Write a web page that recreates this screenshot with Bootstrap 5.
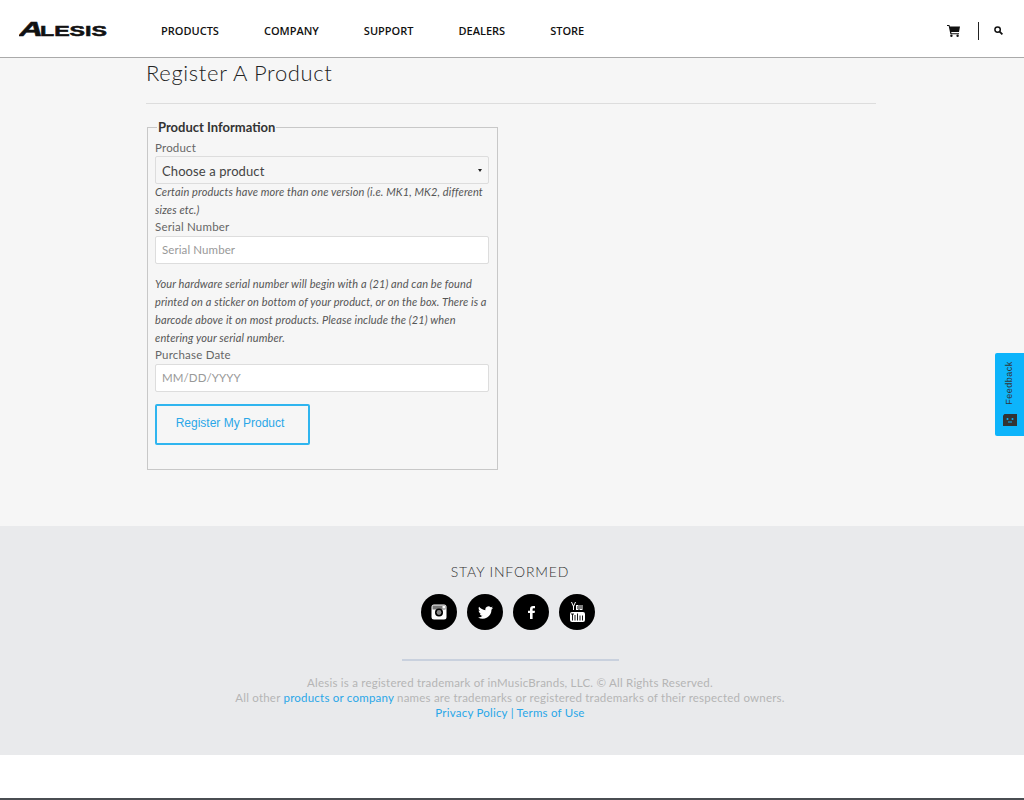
<!DOCTYPE html>
<html lang="en">
<head>
    <meta charset="UTF-8">
    <meta name="viewport" content="width=device-width, initial-scale=1.0">
    <title>Alesis - Register A Product</title>
    <link rel="stylesheet" href="https://cdn.jsdelivr.net/npm/bootstrap@5.3.0/dist/css/bootstrap.min.css">
    <style>
        html, body { height: 800px; overflow: hidden; }
        body {
            background: #fff;
            font-family: Lato, "Liberation Sans", sans-serif;
            color: #555;
            font-size: 11.5px;
            border-bottom: 2px solid #4a4d52;
        }
        .site-nav {
            height: 58px;
            padding: 0;
            background: #fff;
            border-bottom: 1px solid #aaa;
        }
        .logo-box { width: 161px; padding-left: 19px; display: block; line-height: 0; }
        .logo-box text { font-family: "Liberation Sans", sans-serif; font-weight: 700; stroke: #111; stroke-width: .5px; }
        .logo-box .logo-a { font-style: italic; }
        .main-links { gap: 45px; padding-top: 5px; }
        .main-links a {
            padding: 0;
            font-family: "Open Sans", sans-serif;
            font-size: 11px;
            font-weight: 600;
            color: #111;
            text-transform: uppercase;
        }
        .nav-tools { margin-left: auto; padding-right: 21px; padding-top: 4px; }
        .tool-sep { width: 1px; height: 18px; background: #222; margin: 0 15px 0 18px; }
        .page-main { height: 468px; background: #f6f6f6; }
        .page-wrap { width: 730px; margin-left: 146px; }
        .page-title {
            margin: 0;
            padding-top: 2px;
            height: 46px;
            font-family: Lato, sans-serif;
            font-size: 22px;
            font-weight: 300;
            line-height: 26px;
            letter-spacing: .65px;
            color: #222;
            border-bottom: 1px solid #ddd;
        }
        .info-box {
            width: 351px;
            height: 352px;
            margin: 14px 0 0 1px;
            padding: 0 8px 0 7px;
            border: 1px solid #c8c8c8;
        }
        .info-box legend {
            float: none;
            width: auto;
            margin: 0 0 0 2px;
            padding: 0 1px;
            font-size: 13px;
            font-weight: 700;
            line-height: 18px;
            color: #333;
        }
        .field-label { display: block; margin: 1px 0 0; font-size: 11.5px; line-height: 14px; letter-spacing: .2px; color: #666; }
        .first-label { margin-top: 5px; }
        .help-note { margin: -1px 0 0; font-size: 11px; font-style: italic; line-height: 18px; letter-spacing: .12px; color: #555; }
        .help-long { margin-top: 11px; }
        .input-gap { margin-top: 2px; }
        .select-wrap.input-gap { margin-top: 1px; }
        .info-box .form-select, .info-box .form-control {
            height: 28px;
            padding: 0 6px 2px;
            border: 1px solid #ddd;
            border-radius: 2px;
            font-size: 11.5px;
            letter-spacing: .1px;
        }
        .info-box .form-select {
            padding: 3px 6px 0;
            font-size: 13px;
            color: #444;
            background-color: #f6f6f6;
            background-image: none;
        }
        .info-box .form-control::placeholder { color: #999; opacity: 1; }
        .select-wrap { position: relative; }
        .select-wrap::after {
            content: "";
            position: absolute;
            right: 7px;
            top: 13px;
            border: 2.5px solid transparent;
            border-top: 3px solid #222;
            border-bottom: 0;
        }
        .save-btn {
            display: block;
            width: 155px;
            height: 41px;
            margin-top: 12px;
            padding: 0 5px 3px 0;
            background: transparent;
            border: 2px solid #2fb5ef;
            border-radius: 2px;
            font-family: "Liberation Sans", sans-serif;
            font-size: 12px;
            color: #2aa7e8;
        }
        .site-foot { height: 229px; padding-right: 4px; background: #e9eaec; text-align: center; }
        .foot-title {
            margin: 0;
            padding-top: 37px;
            font-family: Lato, sans-serif;
            font-size: 14px;
            font-weight: 300;
            line-height: 18px;
            letter-spacing: .85px;
            color: #333;
        }
        .social-row { gap: 10px; margin: 13px 4px 0 0; }
        .round-icon {
            width: 36px;
            height: 36px;
            border-radius: 50%;
            background: #000;
            color: #fff;
        }
        .foot-rule { width: 217px; height: 2px; margin: 29px 0 0 402px; background: #c9d1de; }
        .foot-legal { margin: 14px 0 0; font-size: 11.5px; line-height: 15px; letter-spacing: .22px; color: #b5b5b5; }
        .foot-legal a, .foot-legal span { color: #2aa7e8; text-decoration: none; }
        .feedback-tab {
            position: fixed;
            right: 0;
            top: 353px;
            width: 29px;
            height: 83px;
            background: #0db4fb;
            border-radius: 2px 0 0 2px;
            color: #333;
        }
        .feedback-tab span {
            position: absolute;
            left: 15px;
            top: 30px;
            transform: translate(-50%, -50%) rotate(-90deg);
            font-family: "Liberation Sans", sans-serif;
            font-size: 9px;
            letter-spacing: .5px;
            white-space: nowrap;
        }
        .feedback-tab svg { position: absolute; left: 8px; top: 61px; }
    </style>
</head>
<body>
    <nav class="navbar site-nav flex-nowrap justify-content-start">
        <a class="logo-box" href="#">
            <svg width="90" height="20" viewBox="0 0 90 20">
                <text class="logo-a" x="0" y="17" font-size="20" textLength="24" lengthAdjust="spacingAndGlyphs" fill="#111">A</text>
                <text x="21" y="17" font-size="15" textLength="67" lengthAdjust="spacingAndGlyphs" fill="#111">LESIS</text>
            </svg>
        </a>
        <div class="nav flex-nowrap main-links">
            <a class="nav-link" href="#">Products</a>
            <a class="nav-link" href="#">Company</a>
            <a class="nav-link" href="#">Support</a>
            <a class="nav-link" href="#">Dealers</a>
            <a class="nav-link" href="#">Store</a>
        </div>
        <div class="d-flex align-items-center nav-tools">
            <svg width="13" height="12" viewBox="0 0 13 12"><path fill="#111" d="M0 0h2.400l.5 1.600H13l-1 5.400H4.200l.3 1.200H12v1H3.400L1.700 1H0z"/><circle cx="4.400" cy="10.800" r="1.200" fill="#111"/><circle cx="10.600" cy="10.800" r="1.200" fill="#111"/></svg>
            <div class="tool-sep"></div>
            <svg width="9" height="9" viewBox="0 0 9 9"><circle cx="3.600" cy="3.600" r="2.700" fill="none" stroke="#111" stroke-width="1.500"/><path d="M5.600 5.600 8.400 8.400" stroke="#111" stroke-width="1.800"/></svg>
        </div>
    </nav>

    <main class="page-main">
        <div class="page-wrap">
            <h1 class="page-title">Register A Product</h1>
            <form>
                <fieldset class="info-box">
                    <legend>Product Information</legend>
                    <label class="field-label first-label" for="product">Product</label>
                    <div class="select-wrap input-gap">
                        <select id="product" class="form-select">
                            <option>Choose a product</option>
                        </select>
                    </div>
                    <p class="help-note">Certain products have more than one version (i.e. MK1, MK2, different sizes etc.)</p>
                    <label class="field-label" for="serial">Serial Number</label>
                    <input id="serial" type="text" class="form-control input-gap bg-white" placeholder="Serial Number">
                    <p class="help-note help-long">Your hardware serial number will begin with a (21) and can be found printed on a sticker on bottom of your product, or on the box. There is a barcode above it on most products. Please include the (21) when entering your serial number.</p>
                    <label class="field-label" for="pdate">Purchase Date</label>
                    <input id="pdate" type="text" class="form-control input-gap bg-white" placeholder="MM/DD/YYYY">
                    <button type="button" class="btn save-btn">Register My Product</button>
                </fieldset>
            </form>
        </div>
    </main>

    <footer class="site-foot">
        <h2 class="foot-title">STAY INFORMED</h2>
        <div class="d-flex justify-content-center social-row">
            <a class="round-icon d-flex align-items-center justify-content-center" href="#">
                <svg width="16" height="16" viewBox="0 0 16 16"><rect x=".5" y=".5" width="15" height="15" rx="2.500" fill="#fff"/><rect x="1.500" y="1.500" width="13" height="4" fill="#777"/><circle cx="8" cy="8.500" r="4" fill="#000"/><circle cx="8" cy="8.500" r="2.400" fill="#888"/><rect x="11.500" y="2" width="2.500" height="2.500" fill="#fff"/></svg>
            </a>
            <a class="round-icon d-flex align-items-center justify-content-center" href="#">
                <svg width="15" height="13" viewBox="0 0 24 20"><path fill="#fff" d="M24 2.400c-.9.4-1.800.7-2.800.8 1-.6 1.800-1.600 2.200-2.700-1 .6-2 1-3.100 1.200A4.900 4.900 0 0 0 11.900 6.200C7.800 6 4.200 4 1.700.9.400 3.100 1 6 3.200 7.500c-.8 0-1.600-.2-2.200-.6 0 2.300 1.600 4.400 3.900 4.900-.7.200-1.500.2-2.200.1.600 2 2.400 3.400 4.600 3.400A9.900 9.900 0 0 1 0 17.800 14 14 0 0 0 21.500 5.400c1-.7 1.800-1.600 2.500-3z"/></svg>
            </a>
            <a class="round-icon d-flex align-items-center justify-content-center" href="#">
                <svg width="7" height="13" viewBox="0 0 7 13"><path fill="#fff" d="M2 13V7H0V4.800h2V3.200C2 1.200 3.200 0 5 0h2v2.200H5.700c-.9 0-1.100.5-1.100 1.100v1.500H7L6.600 7h-2v6z"/></svg>
            </a>
            <a class="round-icon d-flex align-items-center justify-content-center" href="#">
                <svg width="15" height="20" viewBox="0 0 15 20"><path fill="#fff" d="M2 0l1.500 3.500L5 0h1L4 4.500V8H3V4.500L1 0zM6 3h2.500v5H6zM7 4v3h.5V4zM9.500 3h1v4h1V3h1v5h-3z"/><rect y="10" width="15" height="10" rx="2" fill="#fff"/><path stroke="#000" stroke-width=".9" d="M1 12h3M2.500 12v6.500M5 13v5.500M7.500 11.500v7M10 13.500v5M12.500 13.500v5"/></svg>
            </a>
        </div>
        <div class="foot-rule"></div>
        <p class="foot-legal">
            Alesis is a registered trademark of inMusicBrands, LLC. &copy; All Rights Reserved.<br>
            All other <a href="#">products or company</a> names are trademarks or registered trademarks of their respected owners.<br>
            <a href="#">Privacy Policy</a> <span>|</span> <a href="#">Terms of Use</a>
        </p>
    </footer>

    <a class="feedback-tab" href="#">
        <span>Feedback</span>
        <svg width="14" height="12" viewBox="0 0 14 12"><path fill="#333" d="M1.500 0H14v12H0V1.500z"/><circle cx="4.500" cy="5" r="1" fill="#0db4fb"/><circle cx="9.500" cy="5" r="1" fill="#0db4fb"/><path d="M5 8h4" stroke="#0db4fb" stroke-width="1"/></svg>
    </a>
    <script src="https://cdn.jsdelivr.net/npm/bootstrap@5.3.0/dist/js/bootstrap.bundle.min.js"></script>
</body>
</html>
